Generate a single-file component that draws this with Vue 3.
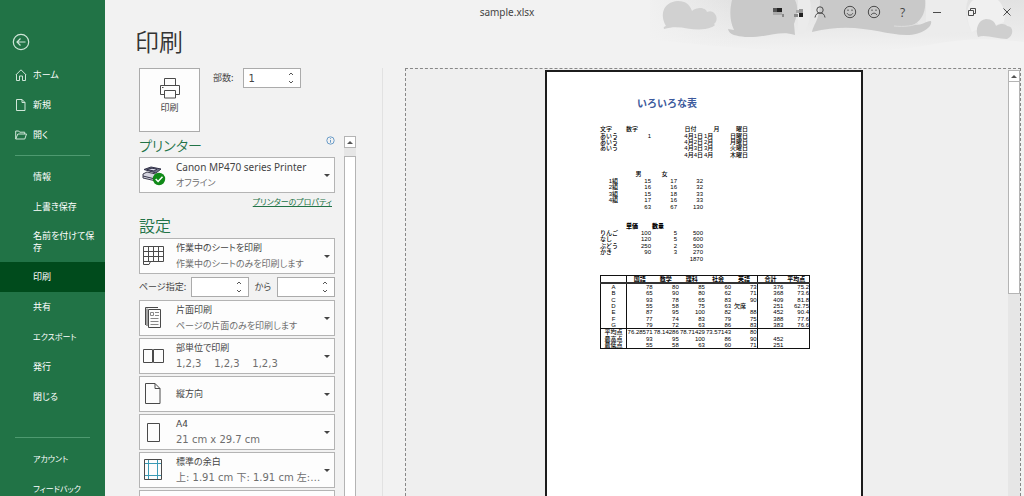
<script setup>
import { ref } from 'vue'

const copies = ref('1')
const pageFrom = ref('')
const pageTo = ref('')

const menu = [
  { label: '情報' },
  { label: '上書き保存' },
  { label: '名前を付けて保存', tall: true },
  { label: '印刷', active: true },
  { label: '共有' },
  { label: 'エクスポート', kana: true },
  { label: '発行' },
  { label: '閉じる' },
]

const layoutOptions = [
  { icon: 'sides', title: '片面印刷', detail: 'ページの片面のみを印刷します' },
  { icon: 'collate', title: '部単位で印刷', detail: '1,2,3    1,2,3    1,2,3', latin: true },
  { icon: 'portrait', title: '縦方向', detail: '' },
  { icon: 'paper', title: 'A4', detail: '21 cm x 29.7 cm', latin: true },
  { icon: 'margins', title: '標準の余白', detail: '上: 1.91 cm 下: 1.91 cm 左:…', latin: true },
  { icon: 'scale', title: '拡大縮小なし', detail: '' },
]

const dates = [
  ['あいう', '1', '', '4月1日', '1月', '日曜日'],
  ['あいう', '', '', '4月2日', '2月', '月曜日'],
  ['あいう', '', '', '4月3日', '3月', '火曜日'],
  ['', '', '', '4月4日', '4月', '木曜日'],
]
const classes = [
  ['1組', 15, 17, 32],
  ['2組', 16, 16, 32],
  ['3組', 15, 18, 33],
  ['4組', 17, 16, 33],
  ['', 63, 67, 130],
]
const fruit = [
  ['りんご', 100, 5, 500],
  ['なし', 120, 5, 600],
  ['ぶどう', 250, 2, 500],
  ['かき', 90, 3, 270],
  ['', '', '', 1870],
]
const subjects = ['', '国語', '数学', '理科', '社会', '英語', '合計', '平均点']
const scores = [
  ['A', 78, 80, 85, 60, 73, 376, 75.2],
  ['B', 65, 90, 80, 62, 71, 368, 73.6],
  ['C', 93, 78, 65, 83, 90, 409, 81.8],
  ['D', 55, 58, 75, 63, '欠席', 251, 62.75],
  ['E', 87, 95, 100, 82, 88, 452, 90.4],
  ['F', 77, 74, 83, 79, 75, 388, 77.6],
  ['G', 79, 72, 63, 86, 83, 383, 76.6],
]
const summary = [
  ['平均点', '76.28571', '78.14286', '78.71429', '73.57143', 80, '', ''],
  ['最高点', 93, 95, 100, 86, 90, 452, ''],
  ['最低点', 55, 58, 63, 60, 71, 251, ''],
]
</script>

<template>
  <div class="app">
    <nav class="sidebar" aria-label="ファイル">
      <button class="back" type="button" aria-label="戻る">
        <svg width="18" height="18" viewBox="0 0 18 18" class="line">
          <circle cx="9" cy="9" r="7.7" />
          <path d="M13.5 9H5M8.5 5.5L5 9l3.5 3.5" />
        </svg>
      </button>
      <a href="#" class="item top">
        <svg width="12" height="12" viewBox="0 0 12 12" class="line"><path d="M.8 6L6 .8 11.200 6M1.500 5.500v6h3V7h3v4.500h3v-6" /></svg>
        <span>ホーム</span>
      </a>
      <a href="#" class="item top">
        <svg width="12" height="12" viewBox="0 0 12 12" class="line"><path d="M1.500.5h5.500l3 3v8h-8.500zM7 .5v3h3" /></svg>
        <span>新規</span>
      </a>
      <a href="#" class="item top">
        <svg width="12" height="12" viewBox="0 0 12 12" class="line"><path d="M.7 10V2h3l1 1.200h5V5M.7 10L2.800 5h8.700L9.800 10z" /></svg>
        <span>開く</span>
      </a>
      <hr class="rule" />
      <a v-for="m in menu" :key="m.label" href="#" class="item" :class="{ active: m.active, tall: m.tall, kana: m.kana }">
        <span>{{ m.label }}</span>
      </a>
      <hr class="rule lower" />
      <a href="#" class="item kana"><span>アカウント</span></a>
      <a href="#" class="item kana"><span>フィードバック</span></a>
    </nav>

    <main class="main">
      <h1>印刷</h1>
      <div class="columns">
        <section class="settings">
          <div class="print-row">
            <button class="print" type="button">
              <svg width="22" height="22" viewBox="0 0 22 22" class="ink">
                <path d="M5.500 8V1.500h11V8M5.500 17.500h-4V8.500h19v9h-4M5.500 13.500h11v7.500h-11z" />
                <path d="M3 10.500h1.500" />
              </svg>
              <span>印刷</span>
            </button>
            <label for="copies">部数:</label>
            <div class="spin">
              <input id="copies" v-model="copies" type="text" />
              <div class="steps">
                <button type="button" aria-label="増やす"><svg width="6" height="4" viewBox="0 0 6 4"><path d="M1 3l2-2 2 2" /></svg></button>
                <button type="button" aria-label="減らす"><svg width="6" height="4" viewBox="0 0 6 4"><path d="M1 1l2 2 2-2" /></svg></button>
              </div>
            </div>
          </div>

          <div class="scroll-area">
            <div class="list">
              <div class="heading">
                <h2>プリンター</h2>
                <svg width="9" height="9" viewBox="0 0 9 9" class="info"><circle cx="4.500" cy="4.500" r="3.700" /><path d="M4.500 4v2.700M4.500 2.200v.9" /></svg>
              </div>
              <button class="option" type="button" aria-haspopup="listbox">
                <svg width="24" height="24" viewBox="0 0 24 24">
                  <path d="M1 11l4-2 13 3-4 6-13-3z" fill="#d5d5df" stroke="#3c3c4c" />
                  <path d="M2 6.500L9 4l10 2-5 4z" fill="#6e6e86" stroke="#34344a" />
                  <path d="M5 6.500l5-1.300 5 1-3 1.800zM1 13l12 3" fill="#dedeee" stroke="#34344a" />
                  <circle cx="17" cy="16" r="6.200" fill="#108a18" />
                  <path d="M13.700 16l2.400 2.500 4.400-4.700" fill="none" stroke="#fff" stroke-width="1.500" />
                </svg>
                <span class="text"><b class="device">Canon MP470 series Printer</b><i>オフライン</i></span>
                <span class="arrow"></span>
              </button>
              <a href="#" class="props">プリンターのプロパティ</a>

              <h2 class="second">設定</h2>
              <button class="option" type="button" aria-haspopup="listbox">
                <svg width="24" height="24" viewBox="0 0 24 24" class="ink">
                  <path d="M1.500 2.500h20v15h-13l-1.500 3H1.500zM1.500 7.500h20M1.500 12.500h20M1.500 17.500h8M6.500 2.500v15M11.500 2.500v15M16.500 2.500v15" />
                </svg>
                <span class="text"><b>作業中のシートを印刷</b><i>作業中のシートのみを印刷します</i></span>
                <span class="arrow"></span>
              </button>
              <div class="range">
                <label for="from">ページ指定:</label>
                <div class="spin">
                  <input id="from" v-model="pageFrom" type="text" />
                  <div class="steps">
                    <button type="button" aria-label="増やす"><svg width="6" height="4" viewBox="0 0 6 4"><path d="M1 3l2-2 2 2" /></svg></button>
                    <button type="button" aria-label="減らす"><svg width="6" height="4" viewBox="0 0 6 4"><path d="M1 1l2 2 2-2" /></svg></button>
                  </div>
                </div>
                <label for="to" class="mid">から</label>
                <div class="spin">
                  <input id="to" v-model="pageTo" type="text" />
                  <div class="steps">
                    <button type="button" aria-label="増やす"><svg width="6" height="4" viewBox="0 0 6 4"><path d="M1 3l2-2 2 2" /></svg></button>
                    <button type="button" aria-label="減らす"><svg width="6" height="4" viewBox="0 0 6 4"><path d="M1 1l2 2 2-2" /></svg></button>
                  </div>
                </div>
              </div>
              <button v-for="o in layoutOptions" :key="o.icon" class="option" type="button" aria-haspopup="listbox">
                <svg width="24" height="24" viewBox="0 0 24 24" class="ink">
                  <template v-if="o.icon === 'sides'">
                    <path d="M6.500 3.500h12v18h-12zM3.500 19V1.500H16M5 20V2.500" />
                    <path d="M8.500 6.500h3v3h-3zM13 6.500h4M13 9.500h4M8.500 12.500h8M8.500 15.500h8M8.500 18.500h8" stroke="#888" />
                  </template>
                  <path v-else-if="o.icon === 'collate'" d="M1.500 5.500h9v13h-9zM11.500 5.500h10v13h-10z" />
                  <path v-else-if="o.icon === 'portrait'" d="M3.500 1.500h9.500l5 5v15H3.500zM13 1.500v5h5" />
                  <path v-else-if="o.icon === 'paper'" d="M5.500 3.500h12v18h-12z" />
                  <template v-else-if="o.icon === 'margins'">
                    <path d="M6.500 2v20M15.500 2v20M3 5.500h16M3 17.500h16" stroke="#3a9ab5" />
                    <path d="M2.500 1.500h17v20h-17z" />
                  </template>
                  <path v-else d="M3.500 3.500h16v18h-16z" />
                </svg>
                <span class="text"><b>{{ o.title }}</b><i v-if="o.detail" :class="{ latin: o.latin }">{{ o.detail }}</i></span>
                <span class="arrow"></span>
              </button>
            </div>
            <div class="bar inner">
              <div class="cap"></div>
              <div class="thumb"></div>
            </div>
          </div>
        </section>

        <section class="preview" aria-label="印刷プレビュー">
          <div class="canvas">
            <article class="page">
              <h3>いろいろな表</h3>
              <table class="t1">
                <colgroup><col class="a" /><col /><col /><col /><col /><col class="s" /></colgroup>
                <tbody>
                  <tr><td>文字</td><td>数字</td><td></td><td class="c">日付</td><td class="c">月</td><td class="r">曜日</td></tr>
                  <tr v-for="(row, i) in dates" :key="i">
                    <td v-for="(v, j) in row" :key="j" :class="{ r: j === 1 || j === 3 || j === 5 }">{{ v }}</td>
                  </tr>
                </tbody>
              </table>
              <table class="t2">
                <colgroup><col class="a" /><col /><col /><col /></colgroup>
                <tbody>
                  <tr><td></td><td class="c">男</td><td class="c">女</td><td></td></tr>
                  <tr v-for="(row, i) in classes" :key="i">
                    <td v-for="(v, j) in row" :key="j" class="r" :class="{ team: j === 0 }">{{ v }}</td>
                  </tr>
                </tbody>
              </table>
              <table class="t3">
                <colgroup><col class="a" /><col /><col /><col /></colgroup>
                <tbody>
                  <tr><td></td><th>単価</th><th>数量</th><td></td></tr>
                  <tr v-for="(row, i) in fruit" :key="i">
                    <td v-for="(v, j) in row" :key="j" :class="{ r: j > 0 }">{{ v }}</td>
                  </tr>
                </tbody>
              </table>
              <table class="t4">
                <colgroup><col class="a" /><col /><col /><col /><col /><col /><col /><col /></colgroup>
                <thead>
                  <tr><th v-for="(s, i) in subjects" :key="i">{{ s }}</th></tr>
                </thead>
                <tbody>
                  <tr v-for="(row, i) in scores" :key="i">
                    <td v-for="(v, j) in row" :key="j" :class="{ c: j === 0, r: j > 0 && v !== '欠席', absent: v === '欠席' }">{{ v }}</td>
                  </tr>
                </tbody>
                <tbody class="sum">
                  <tr v-for="(row, i) in summary" :key="i">
                    <td v-for="(v, j) in row" :key="j" :class="{ c: j === 0, r: j > 0 }">{{ v }}</td>
                  </tr>
                </tbody>
              </table>
            </article>
          </div>
          <div class="bar outer">
            <div class="cap"></div>
            <div class="thumb"></div>
          </div>
        </section>
      </div>
    </main>

    <header class="titlebar">
      <svg class="clouds" width="374" height="64" viewBox="10 0 374 64">
        <defs>
          <linearGradient id="fade" x1="0" y1="0" x2="0" y2="1">
            <stop offset="0" stop-color="#e2e2e2" />
            <stop offset=".5" stop-color="#e9e9e9" />
            <stop offset="1" stop-color="#f2f2f2" />
          </linearGradient>
          <linearGradient id="side" x1="0" y1="0" x2="1" y2="0">
            <stop offset="0" stop-color="#f2f2f2" />
            <stop offset=".25" stop-color="#f2f2f2" stop-opacity="0" />
          </linearGradient>
        </defs>
        <path d="M0 0h384v42c-30-4-60-4-90 2-60 12-160 10-294-6z" fill="url(#fade)" />
        <path d="M0 0h384v64H0z" fill="url(#side)" />
        <path d="M286 0h42c-4 10-2 22 4 32-16 0-30 2-46 2z" fill="#ececec" />
        <path d="M328 8c2-5 4-8 6-8h24c6 6 8 14 6 22-8 4-26 6-32 10-4-8-6-16-4-24z" fill="#f0f0f0" />
        <path d="M158 0h12c2 10 0 22-6 34h-6z" fill="#ebebeb" />
        <path d="M26 26c-6-10-4-24 12-25 8 0 12 4 14 10 6-5 14-3 15 1 8-4 13 8 7 12 2 1 0 2-2 3-18 7-30-4-48 2-1-2 0-2 2-3z" fill="#d1d1d1" />
        <path d="M92 0h63c4 8 2 16-1 24l1 11c-16-5-28 3-50 2-8-1-16-2-17-8l6 1c-5-10-4-22-2-30z" fill="#c9c9c9" />
        <path d="M180 0h105c1 10-2 20-12 25 12 0 12-4 18-4 2 6-10 14-24 14-26 0-50-14-95-3 2-9 8-12 8-32z" fill="#c9c9c9" />
        <path d="M254 26c10 1 20 0 24-3" fill="none" stroke="#dedede" />
        <path d="M338 37c-3-8 0-17 8-18 6 0 9 3 10 7 6-4 11-1 11 0 7 0 7 10 0 13-10 0-22-5-29-2z" fill="#cfcfcf" />
      </svg>
      <span></span>
      <span class="name">sample.xlsx</span>
      <div class="controls">
        <svg width="20" height="14" viewBox="0 0 20 14" class="mosaic">
          <path d="M5 3h4v4H5z" fill="#555" /><path d="M9 3h5v4H9z" fill="#222" /><path d="M5 7h9v3H5z" fill="#aaa" /><path d="M14 9h2v3h-2z" fill="#888" />
        </svg>
        <svg width="20" height="14" viewBox="0 0 20 14" class="mosaic">
          <path d="M6 9h4v3H6z" fill="#888" /><path d="M8 5h3v3H8z" fill="#aaa" /><path d="M11 8h4v4h-4z" fill="#222" /><path d="M11 4h4v4h-4z" fill="#999" />
        </svg>
        <button type="button" class="n" aria-label="アカウント"><svg width="14" height="14" viewBox="0 0 14 14" class="ink"><circle cx="7" cy="5" r="3.200" /><path d="M2 12.500c.5-3 2-4.500 5-4.500s4.500 1.500 5 4.500" /></svg></button>
        <button type="button" class="n gap" aria-label="良い"><svg width="14" height="14" viewBox="0 0 14 14" class="ink"><circle cx="7" cy="7" r="5.700" /><path d="M4.200 8.300c1 2.400 4.600 2.400 5.600 0M5 4.500v1.500M9 4.500v1.500" /></svg></button>
        <button type="button" class="n" aria-label="悪い"><svg width="14" height="14" viewBox="0 0 14 14" class="ink"><circle cx="7" cy="7" r="5.700" /><path d="M4.200 10c1-2.400 4.600-2.400 5.600 0M5 4.500v1.500M9 4.500v1.500" /></svg></button>
        <button type="button" class="help">?</button>
        <button type="button" class="w" aria-label="最小化"><svg width="10" height="10" viewBox="0 0 10 10" class="ink"><path d="M1 5.500h8" /></svg></button>
        <button type="button" class="w" aria-label="元に戻す"><svg width="10" height="10" viewBox="0 0 10 10" class="ink"><path d="M1.500 3.500h5v5h-5zM3.500 3V1.500h5v5H7" /></svg></button>
        <button type="button" class="w" aria-label="閉じる"><svg width="10" height="10" viewBox="0 0 10 10" class="ink"><path d="M1.500 1.500l7 7M8.500 1.500l-7 7" /></svg></button>
      </div>
    </header>
  </div>
</template>

<style>
body { margin: 0; background: #f2f2f2; }
</style>

<style scoped>
* { box-sizing: border-box; }
.app {
  position: relative;
  display: flex;
  height: 100vh;
  overflow: hidden;
  background: #f2f2f2;
  color: #444;
  font: 9px/12px "Noto Sans CJK JP", sans-serif;
  font-feature-settings: "palt";
}
button, input { font: inherit; font-feature-settings: inherit; color: inherit; padding: 0; margin: 0; border: 0; background: none; border-radius: 0; }
svg { flex: none; display: block; }
.ink { fill: none; stroke: #4a4a4a; stroke-width: 1; }
.line { fill: none; stroke: #cfe6d8; stroke-width: 1; }

.sidebar { flex: none; width: 105px; background: #217346; color: #fff; padding-top: 33px; }
.back { display: block; margin: 0 0 9px 12px; }
.back .line { stroke-width: 1.2; }
.item { display: flex; align-items: center; height: 30px; padding: 0 9px 0 33px; color: #fff; text-decoration: none; }
.item.top { padding-left: 15px; gap: 6px; }
.item.tall { height: 40px; }
.item.kana { font-size: 8px; }
.item.active { background: #004b1c; }
.rule { height: 1px; margin: 5px 15px 6px; border: 0; background: #4e9a70; }
.rule.lower { margin: 25px 15px 6px; }

.main { flex: 1; min-width: 0; display: flex; flex-direction: column; }
h1 { margin: 26px 0 12px 30px; font-size: 24px; line-height: 30px; font-weight: 350; color: #333; }
.columns { flex: 1; min-height: 0; display: flex; padding-right: 3px; }
.settings { flex: none; width: 278px; padding-left: 34px; border-right: 1px solid #e2e2e2; display: flex; flex-direction: column; }
.print-row { flex: none; display: flex; align-items: flex-start; }
.print { width: 61px; height: 64px; border: 1px solid #ababab; background: #fdfdfd; display: flex; flex-direction: column; align-items: center; padding-top: 8px; gap: 3px; }
.print-row label { margin: 4px 9px 0 13px; }
.spin { display: flex; width: 58px; height: 20px; border: 1px solid #ababab; background: #fff; }
.spin input { flex: 1; min-width: 0; padding-left: 5px; font: 10px "DejaVu Sans", sans-serif; }
.steps { width: 12px; display: flex; flex-direction: column; justify-content: space-between; padding: 3px 0; }
.steps svg { fill: none; stroke: #555; stroke-width: 1; }

.scroll-area { flex: 1; min-height: 0; display: flex; gap: 9px; padding-top: 4px; }
.list { width: 196px; overflow: hidden; }
.heading { display: flex; justify-content: space-between; height: 21px; }
.info { fill: none; stroke: #6a9cc8; stroke-width: 1; }
h2 { margin: 0; font-size: 14px; line-height: 18px; font-weight: 350; color: #217346; }
h2.second { height: 23px; margin-top: 6px; font-size: 16px; line-height: 20px; }
.option { display: flex; align-items: center; width: 100%; height: 36px; margin-bottom: 2px; padding: 0 4px 0 2px; border: 1px solid #b4b4b4; background: #fdfdfd; text-align: left; }
.text { flex: 1; min-width: 0; margin-left: 10px; display: flex; flex-direction: column; gap: 4px; white-space: pre; font-family: "DejaVu Sans", "Noto Sans CJK JP", sans-serif; }
.text b, .text i { font-weight: 400; font-style: normal; font-size: 9px; line-height: 12px; }
.text i { color: #6e6e6e; }
.text .device { font-family: "Noto Sans", sans-serif; font-size: 10px; }
.text .latin { font-size: 10px; }
.arrow { border: 3px solid transparent; border-top-color: #444; border-bottom: 0; }
.props { display: block; width: max-content; margin-left: auto; margin-right: 3px; font-size: 8px; line-height: 14px; color: #217346; }
.range { display: flex; align-items: center; margin: 3px 0; }
.range label { width: 52px; white-space: nowrap; }
.range .mid { flex: 1; text-align: center; }

.bar { flex: none; display: flex; flex-direction: column; background: #e6e6e6; }
.inner { width: 12px; }
.cap { flex: none; height: 12px; border: 1px solid #b4b4b4; background: #fff; display: flex; align-items: center; justify-content: center; }
.cap::before { content: ""; border: 3px solid transparent; border-bottom-color: #555; border-top: 0; }
.thumb { border: 1px solid #b4b4b4; background: #fff; }
.inner .thumb { flex: 1; margin-top: 8px; border-bottom: 0; }

.preview { flex: 1; min-width: 0; margin-left: 22px; border: 1px dashed #888; border-bottom: 0; display: flex; background: #efefef; padding-top: 1px; }
.canvas { flex: 1; min-width: 0; display: flex; justify-content: center; padding-right: 6px; overflow: hidden; }
.outer { width: 12px; }
.outer .thumb { height: 50%; margin-top: -1px; }
.page { flex: none; width: 318px; border: 2px solid #1c1c1c; border-bottom: 0; background: #fff; padding: 25px 0 0 53px; color: #000; font: 6px/6px "Liberation Sans", "Noto Sans CJK JP", sans-serif; }
h3 { margin: 0 0 15px 37px; font-size: 10px; line-height: 14px; font-weight: 700; color: #3c5a9c; font-feature-settings: normal; }
table { table-layout: fixed; border-collapse: collapse; width: 210px; height: 39px; margin-bottom: 13px; white-space: nowrap; font-weight: 500; }
td, th { padding: 0 1px 0 0; text-align: left; font-weight: inherit; }
.t1 { width: 149px; height: 32px; }
.t2, .t3 { width: 104px; }
.t3 th { font-weight: 900; }
.t4 { height: 74px; border: 1px solid #111; }
col.a { width: 26px; }
col.s { width: 19px; }
.c { text-align: center; }
.r { text-align: right; }
.team { padding-right: 8px; }
.t4 th { text-align: center; font-weight: 700; }
.t4 thead { border-bottom: 2px solid #333; }
.t4 .sum { border-top: 1px solid #111; }
.t4 td, .t4 th { padding: 0; }
.t4 .absent { padding-left: 3px; }
.t4 td:first-child, .t4 th:first-child, .t4 td:nth-child(6), .t4 th:nth-child(6) { border-right: 1px solid #111; }

.titlebar { position: absolute; inset: 0 0 auto 0; height: 24px; display: grid; grid-template-columns: 1fr auto 1fr; align-items: center; pointer-events: none; }
.clouds { position: absolute; top: 0; right: 0; }
.name { padding-right: 10px; font: 10px/14px "Noto Sans", sans-serif; color: #444; }
.controls { position: relative; display: flex; justify-content: flex-end; align-items: center; }
.controls button { display: flex; justify-content: center; align-items: center; height: 24px; pointer-events: auto; }
.n { width: 24px; }
.gap { margin-left: 6px; }
.w { width: 35px; }
.help { width: 33px; font: 12px "Open Sans", sans-serif; }
</style>
